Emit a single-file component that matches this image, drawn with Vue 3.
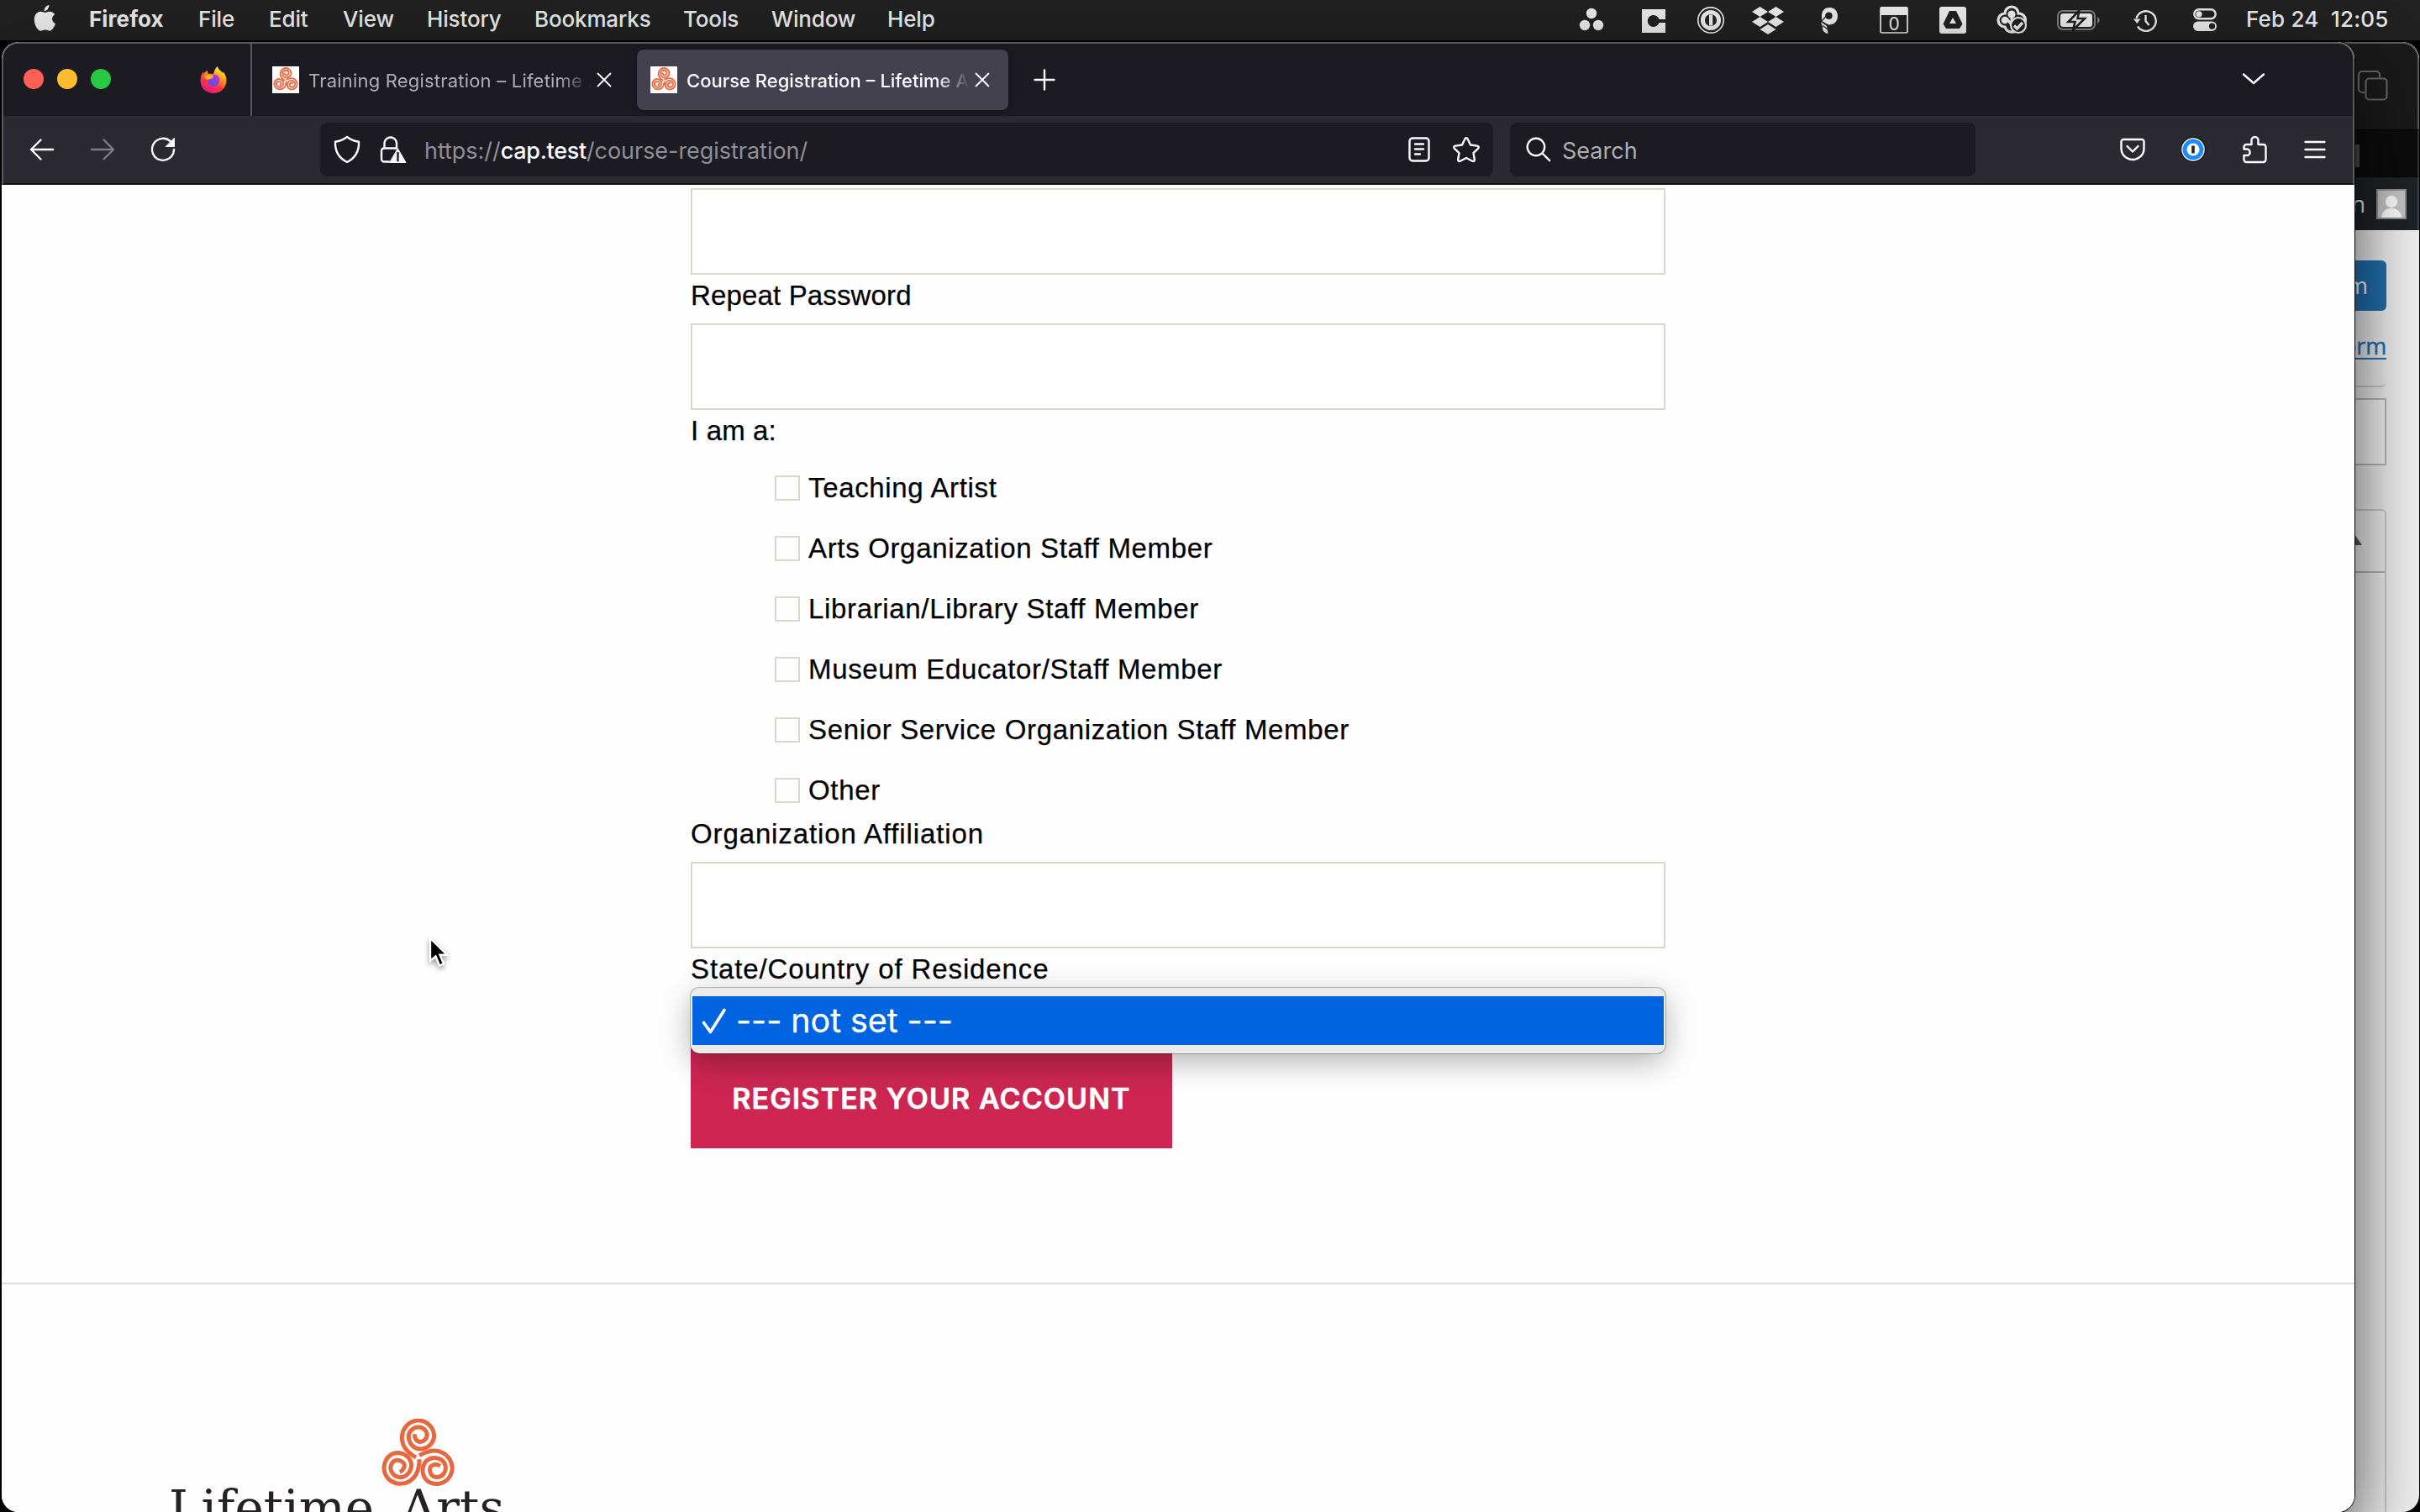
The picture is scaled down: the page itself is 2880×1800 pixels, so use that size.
<!--
  Desktop with a Firefox window on the course registration form,
  a second browser window peeks out behind it on the right.
-->

<script setup>
import {ref} from "vue";

const menus = ["File", "Edit", "View", "History", "Bookmarks", "Tools", "Window", "Help"]

const tabs = ref([
    {title: "Training Registration – Lifetime Arts", active: false},
    {title: "Course Registration – Lifetime Arts", active: true}
])

const roles = [
    "Teaching Artist",
    "Arts Organization Staff Member",
    "Librarian/Library Staff Member",
    "Museum Educator/Staff Member",
    "Senior Service Organization Staff Member",
    "Other"
]

// one arm of the logo, the other two are the same arm rotated
const arm = "M39.3 18.3 A7 9 0 0 0 46 27.6 A9 9 0 0 0 54.3 19.3 A10 10 0 0 0 44 10 A11.5 11.5 0 0 0 32.3 21 A14 15 0 0 0 45.3 36 A17 16.5 0 0 0 62.7 20.3 A19 19 0 0 0 44 2 A19.7 21 0 0 0 24.3 22.7 C24.5 34 34 42 41 46"
const angles = [0, 120, 240]
</script>

<template>
    <div class="desktop">
        <header class="menubar">
            <svg class="apple" width="27" height="34" viewBox="0 0 27 34">
                <path d="M18.4 1 C18.6 4.6 15.6 8.3 12.7 8.2 C12.3 4.8 15.3 1.3 18.4 1 Z M13.6 10 C15 10 16.6 8.7 19.2 8.7 C21.6 8.7 24 10 25.3 12 C20.6 14.8 21.4 21.4 26 23.2 C24.9 26.4 22 31.6 19.2 31.7 C17.2 31.7 16.4 30.5 13.8 30.5 C11.2 30.5 10.3 31.7 8.5 31.7 C5.2 31.7 .8 25 .8 18.4 C.8 12.2 4.6 8.8 8.3 8.8 C10.7 8.8 12.3 10 13.6 10 Z" fill="#e8e8e8"/>
            </svg>
            <strong>Firefox</strong>
            <span v-for="menu in menus" :key="menu">{{ menu }}</span>
            <div class="extras">
                <svg width="30" height="48" viewBox="0 0 30 48">
                    <circle cx="15" cy="16" r="6.2"/>
                    <circle cx="7" cy="30" r="6.2"/>
                    <circle cx="23" cy="30" r="6.2"/>
                </svg>
                <svg width="28" height="48" viewBox="0 0 28 48">
                    <path d="M0 11 H28 V23 H20.5 A7 7 0 1 0 20.5 27 H28 V39 H0 Z"/>
                </svg>
                <svg width="32" height="48" viewBox="0 0 32 48">
                    <circle cx="16" cy="24" r="15.2" class="line thin"/>
                    <circle cx="16" cy="24" r="9.6" class="line" stroke-width="5"/>
                    <rect x="14" y="17.5" width="4.2" height="13"/>
                </svg>
                <svg width="38" height="48" viewBox="0 0 38 48">
                    <path d="M9.5 8 L19 14 L9.5 20 L0 14 Z M28.5 8 L38 14 L28.5 20 L19 14 Z M9.5 20 L19 26 L9.5 32 L0 26 Z M28.5 20 L38 26 L28.5 32 L19 26 Z M19 29 L28.5 35 L19 41 L9.5 35 Z"/>
                </svg>
                <svg width="20" height="48" viewBox="0 0 20 48">
                    <path d="M1 20 C.6 12 5 9 10.5 9 C16 9 20 13 20 19 C20 26 15 30 9 29.500 L1 25 Z M10 14.500 A4.300 4.300 0 1 0 10 23 A4.300 4.300 0 0 0 10 14.500 Z" fill-rule="evenodd"/>
                    <path d="M0 26 L7 31 L8.500 40 C4 39.500 1.500 36 2 32 Z"/>
                    <path d="M0 26 L7.500 18 M2 30.500 L8.500 35" class="dark"/>
                </svg>
                <svg width="34" height="48" viewBox="0 0 34 48">
                    <rect x="1" y="9" width="32" height="30" rx="1.500" class="line thin"/>
                    <rect x="1" y="8" width="32" height="10"/>
                    <text x="17" y="36" text-anchor="middle">0</text>
                </svg>
                <svg width="32" height="48" viewBox="0 0 32 48">
                    <path d="M3 8 H29 A3 3 0 0 1 32 11 V37 A3 3 0 0 1 29 40 H3 A3 3 0 0 1 0 37 V11 A3 3 0 0 1 3 8 Z M12 13 L4.500 28.500 L8 34 H24 L27.500 28.500 L20 13 Z" fill-rule="evenodd"/>
                    <path d="M16 21 L20 28 H12 Z"/>
                </svg>
                <svg width="36" height="48" viewBox="0 0 36 48">
                    <path d="M10 16 A8 8 0 0 1 26 16 A8 8 0 0 1 27 32 A9 9 0 0 1 10 32 A8 8 0 0 1 10 16 Z" class="line" stroke-width="3.200"/>
                    <circle cx="18" cy="17" r="4.600"/>
                    <circle cx="10" cy="24" r="4.300"/>
                    <path d="M12 22 L20 32 M18 18 V28" class="line" stroke-width="3"/>
                    <circle cx="26" cy="30" r="9" fill="#212121" stroke="#e8e8e8" stroke-width="2.200"/>
                    <path d="M21 30.500 L24.500 34 L31 27" class="line" stroke-width="3.400"/>
                </svg>
                <svg width="52" height="48" viewBox="0 0 52 48">
                    <rect x="1" y="13" width="44" height="22" rx="6" class="line dim"/>
                    <rect x="4" y="16" width="38" height="16" rx="3.500"/>
                    <path d="M48 20 C51.500 21.500 51.500 26.500 48 28 Z" class="faded"/>
                    <path d="M26.500 12.500 L13.500 26 H21.500 L19 36 L33 22 H24.500 Z" stroke="#212121" stroke-width="2.600"/>
                </svg>
                <svg width="28" height="48" viewBox="0 0 28 48">
                    <path d="M3.500 22 A11.800 11.800 0 1 1 5 31.500" class="line" stroke-width="2.400"/>
                    <path d="M0 22.500 H8.500 L4.200 28 Z"/>
                    <path d="M14.500 18 V25 L18.500 30" class="line" stroke-width="2.400"/>
                </svg>
                <svg width="28" height="48" viewBox="0 0 28 48">
                    <rect x="1.300" y="11.300" width="25.400" height="11" rx="5.500" class="line" stroke-width="2.400"/>
                    <circle cx="7" cy="16.800" r="3.600"/>
                    <rect x="0" y="25.500" width="28" height="11.500" rx="5.700"/>
                    <circle cx="22.500" cy="31.200" r="3.600" fill="#212121"/>
                </svg>
                <span>Feb 24</span>
                <span>12:05</span>
            </div>
        </header>

        <!-- window in the back -->
        <section class="back-window">
            <div class="back-tabs">
                <svg width="36" height="36" viewBox="0 0 36 36">
                    <path d="M8.500 26 H5 A4 4 0 0 1 1 22 V5 A4 4 0 0 1 5 1 H22 A4 4 0 0 1 26 5 V8.500" />
                    <rect x="9.500" y="9.500" width="25" height="25" rx="4"/>
                </svg>
            </div>
            <div class="back-toolbar"><i></i></div>
            <div class="admin-bar">
                <span>n</span>
                <svg width="36" height="36" viewBox="0 0 36 36">
                    <rect x="1" y="1" width="34" height="34" fill="#c6c6c6" stroke="#8c8f94" stroke-width="2"/>
                    <circle cx="18" cy="15" r="7.200" fill="#fff"/>
                    <path d="M6 34 C7 19 29 19 30 34 Z" fill="#fff"/>
                </svg>
            </div>
            <div class="admin-page">
                <div class="publish">
                    <div class="update">m</div>
                    <a>orm</a>
                </div>
                <div class="short-box"></div>
                <div class="long-box">
                    <div class="long-head"><i></i></div>
                </div>
            </div>
        </section>

        <!-- firefox -->
        <section class="window">
            <div class="chrome">
                <div class="tabstrip">
                    <div class="lights"><i class="red"></i><i class="yellow"></i><i class="green"></i></div>
                    <svg class="fox" width="32" height="32" viewBox="0 0 32 32">
                        <defs>
                            <linearGradient id="flame" x1=".8" y1=".05" x2=".3" y2="1">
                                <stop offset="0" stop-color="#fff44f"/>
                                <stop offset=".35" stop-color="#ff980e"/>
                                <stop offset=".65" stop-color="#ff3647"/>
                                <stop offset="1" stop-color="#e31587"/>
                            </linearGradient>
                            <linearGradient id="globe" x1=".7" y1="0" x2=".3" y2="1">
                                <stop offset="0" stop-color="#b833e1"/>
                                <stop offset="1" stop-color="#5b4fe0"/>
                            </linearGradient>
                        </defs>
                        <path d="M20.500 0 C22 4 25 5 27 8 L27.500 6.500 C30.500 10 31.500 13 31.500 17 C31.500 25.500 24.500 32 16 32 C7 32 .5 25.500 .5 17 C.5 12.500 2 9 4 6.500 L4.500 9 C5.500 7 7.500 5.500 9 5 C8.500 7 9.500 8.500 10.500 9 C13 8.500 15 8.500 16 9.500 C16.500 6 18 2.500 20.500 0 Z" fill="url(#flame)"/>
                        <path d="M15.500 10 C21 8.500 24 13 23 18 C22 23 17 25 13 23 C9 21 8.500 17 10 14.500 C12 15.500 15.500 15 16 13 Z" fill="url(#globe)"/>
                        <path d="M5 12 C8 9.500 12 10 15.500 12 C15 14.500 12 14.500 10.500 15.500 C8.500 16 6 15 5 12 Z" fill="#ffb22e"/>
                    </svg>
                    <div v-for="tab in tabs" :key="tab.title" class="tab" :class="{ active: tab.active }">
                        <svg class="favicon" width="32" height="32" viewBox="-4 -4 95 95">
                            <rect x="-4" y="-4" width="95" height="95" fill="#fff"/>
                            <path v-for="a in angles" :key="a" :d="arm" :transform="`rotate(${a} 43.7 46)`" class="arm"/>
                        </svg>
                        <span class="title">{{ tab.title }}</span>
                        <svg class="close" width="18" height="18" viewBox="0 0 18 18"><path d="M1.500 1.500 L16.500 16.500 M16.500 1.500 L1.500 16.500"/></svg>
                    </div>
                    <svg class="plus" width="26" height="26" viewBox="0 0 26 26"><path d="M13 1.500 V24.500 M1.500 13 H24.500"/></svg>
                    <svg class="chevron" width="30" height="16" viewBox="0 0 30 16"><path d="M3 2.500 L15 13 L27 2.500"/></svg>
                </div>

                <div class="toolbar">
                    <svg class="back" width="30" height="30" viewBox="0 0 30 30"><path d="M28 15 H2 M13.500 3.500 L2 15 L13.500 26.500"/></svg>
                    <svg class="forward" width="30" height="30" viewBox="0 0 30 30"><path d="M2 15 H28 M16.500 3.500 L28 15 L16.500 26.500"/></svg>
                    <svg class="reload" width="30" height="30" viewBox="0 0 30 30">
                        <path d="M28 15 A13 13 0 1 1 23.500 5"/>
                        <path d="M28.500 1.500 V11.500 H18.500 Z" class="solid"/>
                    </svg>
                    <div class="urlbar">
                        <svg class="shield" width="32" height="34" viewBox="0 0 32 34">
                            <path d="M16 2 C20 5 24.500 7 30 7.800 C30.500 18 27 26.500 16 32 C5 26.500 1.500 18 2 7.800 C7.500 7 12 5 16 2 Z"/>
                        </svg>
                        <svg class="lock" width="32" height="34" viewBox="0 0 32 34">
                            <path d="M5.500 15.500 V9 A7.300 7.300 0 0 1 20 9 V15.500 M11 31.500 H5 A3 3 0 0 1 2 28.500 V18.500 A3 3 0 0 1 5 15.500 H20"/>
                            <path d="M21.500 16 L31 32.500 H12 Z" class="solid"/>
                            <path d="M21.500 21 V26.500 M21.500 28.300 V30.300" class="hole"/>
                        </svg>
                        <p>https://<b>cap.test</b>/course-registration/</p>
                        <svg class="reader" width="26" height="30" viewBox="0 0 26 30">
                            <rect x="1.500" y="1.500" width="23" height="27" rx="3.500"/>
                            <path d="M8 8.500 H18 M8 14.500 H18 M8 20.500 H14"/>
                        </svg>
                        <svg class="star" width="34" height="32" viewBox="0 0 34 32">
                            <path d="M17 2.200 C18 2.200 18.500 3 18.800 3.700 L22 10.500 L30 11.600 C32 12 32.300 13.600 31 14.800 L25.500 20.200 L26.800 27.800 C27 29.600 25.800 30.500 24.200 29.700 L17 26 L9.800 29.700 C8.200 30.500 7 29.600 7.200 27.800 L8.500 20.200 L3 14.800 C1.700 13.600 2 12 4 11.600 L12 10.500 L15.200 3.700 C15.500 3 16 2.200 17 2.200 Z"/>
                        </svg>
                    </div>
                    <div class="search">
                        <svg width="30" height="30" viewBox="0 0 30 30"><path d="M12 1.800 A10.200 10.200 0 1 1 11.900 1.800 M19.500 19.500 L28.200 28.200"/></svg>
                        <span>Search</span>
                    </div>
                    <div class="actions">
                        <svg width="30" height="28" viewBox="0 0 30 28">
                            <path d="M4 2 H26 A2.500 2.500 0 0 1 28.500 4.500 V13 A13.500 13 0 0 1 1.500 13 V4.500 A2.500 2.500 0 0 1 4 2 Z M8.500 10 L15 16.500 L21.500 10"/>
                        </svg>
                        <svg width="32" height="32" viewBox="0 0 32 32">
                            <circle cx="16" cy="16" r="14.500" fill="#fff" stroke="#18181c" stroke-width="1.500"/>
                            <circle cx="16" cy="16" r="10" fill="#fff" class="ring"/>
                            <path d="M16 11.500 V20.500" class="key"/>
                        </svg>
                        <svg width="30" height="34" viewBox="0 0 30 34">
                            <path d="M4.500 11 H10.500 V6 A4 4 0 0 1 18.500 6 V11 H24.500 A3 3 0 0 1 27.500 14 V29 A3 3 0 0 1 24.500 32 H4.500 A3 3 0 0 1 1.500 29 V24 H6 A4 4 0 0 0 6 16.500 H1.500 V14 A3 3 0 0 1 4.500 11 Z"/>
                        </svg>
                        <svg width="26" height="22" viewBox="0 0 26 22"><path d="M1.500 2 H24.500 M1.500 11 H24.500 M1.500 20 H24.500"/></svg>
                    </div>
                </div>
            </div>

            <main class="page">
                <form class="form" @submit.prevent>
                    <div class="field"></div>
                    <label>Repeat Password</label>
                    <div class="field"></div>
                    <label>I am a:</label>
                    <ul class="roles">
                        <li v-for="role in roles" :key="role"><i></i>{{ role }}</li>
                    </ul>
                    <label class="wide">Organization Affiliation</label>
                    <div class="field"></div>
                    <label class="wide">State/Country of Residence</label>
                    <div class="select">
                        <div class="popup">
                            <div class="option">
                                <svg width="30" height="32" viewBox="0 0 30 32"><path d="M2.500 17.500 L10.500 28.500 L27 2.500"/></svg>
                                --- not set ---
                            </div>
                        </div>
                    </div>
                    <button type="submit">REGISTER YOUR ACCOUNT</button>
                </form>
                <footer class="footer">
                    <svg width="88" height="82" viewBox="0 0 88 82">
                        <path v-for="a in angles" :key="a" :d="arm" :transform="`rotate(${a} 43.7 46)`" class="arm"/>
                    </svg>
                    <p>Lifetime Arts</p>
                </footer>
            </main>
        </section>

        <svg class="cursor" width="32" height="44" viewBox="0 0 32 44">
            <path d="M4 3 V30 L10.500 24.500 L15 35.500 L20 33.300 L15.500 22.700 H24 Z"/>
        </svg>
    </div>
</template>

<style>
body {
    margin: 0;
    background: #000;
}
</style>

<style scoped>
.desktop {
    position: relative;
    width: 2880px;
    height: 1800px;
    overflow: hidden;
    background: #000;
    font-family: Inter, "Liberation Sans", sans-serif;
}
svg {
    display: block;
    flex: none;
    overflow: visible;
}
p {
    margin: 0;
}

/* menu bar */
.menubar {
    display: grid;
    grid-template-columns: 67px 130px 84px 88px 100px 128px 177px 105px 138px 822px auto;
    align-items: center;
    box-sizing: border-box;
    height: 48px;
    padding-left: 40px;
    background: #212121;
    color: #e8e8e8;
    font-size: 26px;
    font-weight: 500;
    line-height: 46px;
    letter-spacing: -.15px;
    white-space: nowrap;
}
.menubar span, .menubar strong {
    margin-left: -1px;
    height: 48px;
}
.menubar strong {
    font-weight: 700;
    letter-spacing: .1px;
}
.apple {
    margin-top: -4px;
}
.extras {
    display: grid;
    grid-template-columns: 75px 66px 65px 82px 70px 71px 68px 72px 91px 71px 63px 101px auto;
}
.extras span {
    margin-left: 0;
    letter-spacing: .2px;
}
.extras svg {
    fill: #e8e8e8;
}
.extras .line {
    fill: none;
    stroke: #e8e8e8;
}
.extras .thin {
    stroke-width: 1.7px;
}
.extras .dim {
    stroke: #7c7c7c;
    stroke-width: 2px;
}
.extras .faded {
    fill: #7c7c7c;
}
.extras .dark {
    stroke: #212121;
    stroke-width: 1.2px;
}
.extras text {
    font-size: 21px;
    font-weight: 400;
}

/* back window */
.back-window {
    position: absolute;
    left: 2700px;
    top: 50px;
    width: 179px;
    height: 1750px;
    border-radius: 20px;
    overflow: hidden;
    background: #f0f0f1;
}
.back-tabs {
    display: flex;
    align-items: center;
    box-sizing: border-box;
    height: 104px;
    padding: 0 0 2px 106px;
    border: 2px solid #5a5a5a;
    border-width: 2px 2px 0 0;
    border-radius: 0 20px 0 0;
    background: #1a1a1a;
}
.back-tabs svg {
    fill: none;
    stroke: #666;
    stroke-width: 2.2px;
}
.back-toolbar {
    display: flex;
    align-items: center;
    box-sizing: border-box;
    height: 57px;
    border-top: 1px solid #000;
    border-bottom: 1px solid #000;
    border-right: 2px solid #333;
    background: #0c0c0c;
}
.back-toolbar i {
    width: 6px;
    height: 27px;
    margin: 6px 0 0 102px;
    background: #4c4c4c;
}
.admin-bar {
    display: flex;
    align-items: center;
    justify-content: flex-end;
    gap: 13px;
    box-sizing: border-box;
    height: 63px;
    padding-right: 13px;
    border-right: 2px solid #3a4046;
    background: #1d2327;
    color: #f0f0f1;
    font: 27px "Open Sans", sans-serif;
}
.admin-page {
    padding-right: 39px;
    font: 27px "Open Sans", sans-serif;
}
.publish {
    display: flex;
    flex-direction: column;
    align-items: flex-end;
    box-sizing: border-box;
    height: 187px;
    padding-top: 36px;
    border-bottom: 2px solid #c9cacc;
    border-radius: 0 0 6px 0;
}
.update {
    box-sizing: border-box;
    width: 110px;
    height: 60px;
    padding-right: 22px;
    border-radius: 6px;
    background: #2271b1;
    color: #fff;
    line-height: 60px;
    text-align: right;
}
.publish a {
    margin-top: 24px;
    color: #2271b1;
    line-height: 36px;
    letter-spacing: -.2px;
    text-decoration: underline;
    text-decoration-thickness: 2px;
    text-underline-offset: 4px;
    -webkit-text-stroke: .4px #2271b1;
}
.short-box {
    box-sizing: border-box;
    height: 80px;
    margin-top: 13px;
    border: 2px solid #b4b6ba;
    background: #f6f6f7;
}
.long-box {
    box-sizing: border-box;
    height: 1300px;
    margin-top: 52px;
    border: 2px solid #c9cacc;
    border-radius: 6px;
    background: #f2f2f3;
}
.long-head {
    display: flex;
    justify-content: flex-end;
    box-sizing: border-box;
    height: 74px;
    padding: 28px 27px 0 0;
    border-bottom: 2px solid #b4b6ba;
}
.long-head i {
    width: 0;
    height: 0;
    border: 9px solid transparent;
    border-top: 0;
    border-bottom: 13px solid #50575e;
}

/* front window */
.window {
    position: absolute;
    left: 2px;
    top: 50px;
    width: 2800px;
    height: 1750px;
    border-radius: 20px;
    overflow: hidden;
    background: #fff;
    box-shadow: 0 0 0 1px #000, 0 40px 90px rgba(0, 0, 0, .72);
}
.chrome {
    box-sizing: border-box;
    height: 170px;
    border: 2px solid #5a5a5e;
    border-bottom-color: #0c0c0d;
    border-radius: 20px 20px 0 0;
    overflow: hidden;
    background: #2b2a33;
}
.chrome svg {
    fill: none;
    stroke: #fbfbfe;
    stroke-width: 2.4px;
    stroke-linecap: round;
    stroke-linejoin: round;
}
.tabstrip {
    display: flex;
    align-items: center;
    height: 86px;
    background: #1c1b22;
}
.lights {
    display: flex;
    gap: 16px;
    padding: 0 106px 2px 24px;
}
.lights i {
    width: 24px;
    height: 24px;
    border-radius: 50%;
}
.red {
    background: #ff5f57;
}
.yellow {
    background: #febc2e;
}
.green {
    background: #28c840;
}
.chrome .fox {
    margin-right: 30px;
    stroke: none;
}
.tab {
    display: flex;
    align-items: center;
    box-sizing: border-box;
    width: 442px;
    height: 72px;
    margin: 0 8px;
    padding-left: 16px;
    border-radius: 8px;
    color: #b0b0b4;
    font-size: 22px;
    letter-spacing: .2px;
}
.fox + .tab {
    position: relative;
}
.fox + .tab::before {
    content: "";
    position: absolute;
    left: -10px;
    top: -7px;
    width: 2px;
    height: 86px;
    background: #59595e;
}
.tab.active {
    margin-left: 0;
    background: #42414d;
    color: #fbfbfe;
    font-weight: 500;
    letter-spacing: 0;
    box-shadow: 0 0 8px rgba(0, 0, 0, .4);
}
.title {
    width: 337px;
    margin: 2px 6px 0 11px;
    overflow: hidden;
    white-space: nowrap;
    -webkit-mask-image: linear-gradient(to left, transparent, #000 40px);
    mask-image: linear-gradient(to left, transparent, #000 40px);
}
.chrome .favicon {
    stroke: none;
}
.arm, .chrome .favicon .arm {
    fill: none;
    stroke: #e7673e;
    stroke-width: 5px;
    stroke-linecap: butt;
}
.chrome .favicon .arm {
    stroke-width: 5.5px;
}
.chrome .close {
    stroke-width: 1.8px;
    margin-top: -1px;
}
.plus {
    margin-left: 22px;
}
.chevron {
    margin: -3px 103px 0 auto;
}
.toolbar {
    display: flex;
    align-items: center;
    height: 80px;
}
.back {
    margin-left: 31px;
}
.forward {
    margin-left: 42px;
    opacity: .4;
}
.reload {
    margin-left: 42px;
}
.chrome .solid {
    fill: #fbfbfe;
    stroke-width: 1px;
}
.chrome .hole {
    stroke: #1c1b22;
}
.chrome .ring {
    stroke: #1a8cff;
    stroke-width: 5px;
}
.chrome .key {
    stroke: #222;
    stroke-width: 3.6px;
    stroke-linecap: butt;
}
.urlbar {
    display: flex;
    align-items: center;
    box-sizing: border-box;
    width: 1396px;
    height: 64px;
    margin-left: 172px;
    padding-right: 15px;
    border-radius: 8px;
    background: #1c1b22;
    color: #8f8f96;
    font-size: 27px;
    letter-spacing: -.04px;
}
.shield {
    margin-left: 16px;
}
.lock {
    margin-left: 23px;
}
.urlbar p {
    margin: 2px auto 0 21px;
}
.urlbar b {
    color: #fbfbfe;
    font-weight: 500;
    letter-spacing: -.3px;
}
.star {
    margin-left: 26px;
}
.search {
    display: flex;
    align-items: center;
    gap: 13px;
    box-sizing: border-box;
    width: 554px;
    height: 64px;
    margin-left: 20px;
    padding-left: 19px;
    border-radius: 8px;
    background: #1c1b22;
    color: #adadb2;
    font-size: 27px;
}
.search span {
    margin-top: 2px;
}
.search svg {
    margin-top: -1px;
}
.actions {
    display: flex;
    align-items: center;
    margin-left: 172px;
}
.actions svg + svg {
    margin-left: 41px;
}
.actions svg:nth-child(3), .actions svg:nth-child(4) {
    margin-left: 43px;
}

/* registration page */
.page {
    height: 1580px;
    background: #fefefe;
}
.form {
    box-sizing: border-box;
    width: 1160px;
    height: 1307px;
    margin-left: 820px;
    padding-top: 4px;
    color: #000;
    font: 33px "Liberation Sans", Arial, sans-serif;
    -webkit-text-stroke: .25px currentColor;
}
.field {
    box-sizing: border-box;
    height: 103px;
    border: 2px solid #dcd7ca;
    background: #fff;
}
.form label {
    display: block;
    height: 58px;
    line-height: 50px;
    letter-spacing: .15px;
}
.form label.wide {
    letter-spacing: .88px;
}
.roles {
    display: flex;
    flex-direction: column;
    gap: 40px;
    margin: 19px 0 11px;
    padding: 0 0 0 100px;
    list-style: none;
    letter-spacing: .66px;
}
.roles li {
    display: flex;
    align-items: center;
    gap: 10px;
    height: 32px;
}
.roles i {
    box-sizing: border-box;
    width: 30px;
    height: 30px;
    border: 2px solid #dcd7ca;
}
.select {
    position: relative;
    height: 61px;
}
.popup {
    position: absolute;
    left: 0;
    top: -11px;
    box-sizing: border-box;
    width: 1160px;
    height: 78px;
    padding: 10px 2px;
    border-radius: 10px;
    background: #ebebeb;
    box-shadow: 0 0 0 1px rgba(0, 0, 0, .25), 0 10px 36px rgba(0, 0, 0, .3);
}
.option {
    display: flex;
    align-items: center;
    gap: 11px;
    height: 58px;
    padding-left: 11px;
    background: #0064e1;
    color: #fff;
    font: 39.5px/60px Inter, sans-serif;
    letter-spacing: -.08px;
    white-space: nowrap;
}
.option svg {
    margin-top: 1px;
    fill: none;
    stroke: #fff;
    stroke-width: 3.6px;
    stroke-linecap: round;
    stroke-linejoin: round;
}
.form button {
    display: block;
    width: 573px;
    height: 119px;
    padding: 0;
    border: 0;
    background: #cd2653;
    color: #fff;
    font: 600 34px Inter, sans-serif;
    letter-spacing: 1.1px;
    -webkit-text-stroke: .5px #fff;
}
.footer {
    border-top: 2px solid #dcdcdc;
    padding: 160px 0 0 199px;
}
.footer svg {
    margin-left: 253px;
    overflow: hidden;
}
.footer p {
    margin-top: -10px;
    color: #262224;
    font: 58px/68px "DejaVu Serif", serif;
    word-spacing: 14px;
    white-space: nowrap;
}
.cursor {
    position: absolute;
    left: 508px;
    top: 1114px;
    fill: #000;
    stroke: #fff;
    stroke-width: 2.4px;
    filter: drop-shadow(0 3px 3px rgba(0, 0, 0, .4));
}
</style>
